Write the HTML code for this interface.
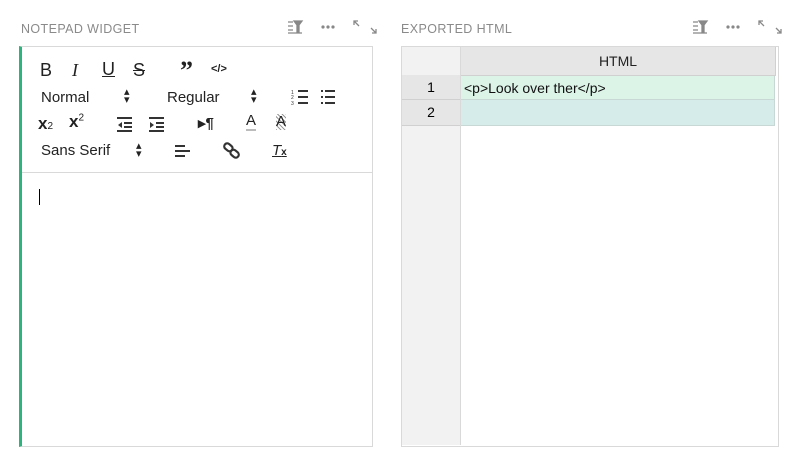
<!DOCTYPE html>
<html><head><style>
body{margin:0;width:800px;height:468px;background:#fff;font-family:"Liberation Sans",sans-serif;position:relative;overflow:hidden}
.t{position:absolute;top:22px;font-size:12.5px;color:#8a8a8a;letter-spacing:0.4px}
.box{position:absolute;border:1px solid #d9d9d9;background:#fff}
.tb{position:absolute;font-size:15px;color:#222}
.g{position:absolute;color:#333}
</style></head><body>
<div class="t" style="left:21px">NOTEPAD WIDGET</div>
<div class="t" style="left:401px">EXPORTED HTML</div>
<svg style="position:absolute;left:287px;top:19px" width="100" height="16">
 <g stroke="#888" stroke-width="1.3" fill="none">
  <path d="M1 3h5M1 7h5M1 11h5M1 14h14"/><path d="M7 2h8l-3 4v7h-2V6z" fill="#888"/>
  <path d="M71 2h-4v4M67 2l5 5M85 14h4v-4M89 14l-5-5"/>
 </g>
 <g fill="#888"><circle cx="36" cy="8" r="1.6"/><circle cx="41" cy="8" r="1.6"/><circle cx="46" cy="8" r="1.6"/></g>
</svg>
<svg style="position:absolute;left:692px;top:19px" width="100" height="16">
 <g stroke="#888" stroke-width="1.3" fill="none">
  <path d="M1 3h5M1 7h5M1 11h5M1 14h14"/><path d="M7 2h8l-3 4v7h-2V6z" fill="#888"/>
  <path d="M71 2h-4v4M67 2l5 5M85 14h4v-4M89 14l-5-5"/>
 </g>
 <g fill="#888"><circle cx="36" cy="8" r="1.6"/><circle cx="41" cy="8" r="1.6"/><circle cx="46" cy="8" r="1.6"/></g>
</svg>
<div class="box" style="left:19px;top:46px;width:350px;height:399px;border-left:3px solid #2db37e"></div>
<div style="position:absolute;left:22px;top:172px;width:351px;height:1px;background:#d9d9d9"></div>
<div class="tb" style="left:40px;top:60px;font-size:18px">B</div>
<div class="tb" style="left:72px;top:60px;font-size:18px;font-style:italic;font-family:'Liberation Serif'">I</div>
<div class="tb" style="left:102px;top:59px;font-size:18px;text-decoration:underline">U</div>
<div class="tb" style="left:133px;top:60px;font-size:18px;text-decoration:line-through">S</div>
<div class="tb" style="left:180px;top:58px;font-size:26px;font-weight:bold;font-family:'Liberation Serif';line-height:26px">&#8221;</div>
<div class="tb" style="left:211px;top:63px;font-size:11px;font-weight:bold">&lt;/&gt;</div>
<div class="tb" style="left:41px;top:89px">Normal</div>
<div class="tb" style="left:124px;top:88px;font-size:11px;line-height:8px">▴<br>▾</div>
<div class="tb" style="left:167px;top:89px">Regular</div>
<div class="tb" style="left:251px;top:88px;font-size:11px;line-height:8px">▴<br>▾</div>
<svg class="g" style="left:290px;top:88px" width="50" height="18" stroke="#333" stroke-width="2">
 <path d="M8 3h10M8 9h10M8 15h10M35 3h10M35 9h10M35 15h10"/><path d="M31 3h2M31 9h2M31 15h2"/>
 <text x="1" y="6" font-size="5" fill="#333" stroke="none">1</text><text x="1" y="11" font-size="5" fill="#333" stroke="none">2</text><text x="1" y="17" font-size="5" fill="#333" stroke="none">3</text>
</svg>
<div class="tb" style="left:38px;top:114px;font-weight:bold;font-size:17px">x<span style="font-size:10px;font-weight:normal">2</span></div>
<div class="tb" style="left:69px;top:112px;font-weight:bold;font-size:17px">x<sup style="font-size:10px;font-weight:normal">2</sup></div>
<svg style="position:absolute;left:117px;top:116px" width="50" height="16" stroke="#333" stroke-width="2">
 <path d="M0 2h15M7 7h8M7 11h8M0 15h15M32 2h15M39 7h8M39 11h8M32 15h15"/>
 <path d="M5 6l-4 3 4 3z M33 6l4 3-4 3z" fill="#333" stroke="none"/>
</svg>
<div class="tb" style="left:198px;top:114px;font-weight:bold">▸¶</div>
<div class="tb" style="left:246px;top:113px;border-bottom:2px solid #bbb;line-height:16px">A</div>
<div class="tb" style="left:276px;top:114px;background:repeating-linear-gradient(45deg,#999 0 1px,#fff 1px 3px);line-height:16px">A</div>
<div class="tb" style="left:41px;top:142px">Sans Serif</div>
<div class="tb" style="left:136px;top:142px;font-size:11px;line-height:8px">▴<br>▾</div>
<svg style="position:absolute;left:175px;top:144px" width="16" height="14" stroke="#333" stroke-width="2"><path d="M0 2h10M0 7h15M0 12h10"/></svg>
<svg style="position:absolute;left:223px;top:142px" width="18" height="18" stroke="#333" stroke-width="2.2" fill="none"><rect x="1" y="2" width="9" height="6" rx="3" transform="rotate(40 5 5)"/><rect x="7" y="9" width="9" height="6" rx="3" transform="rotate(40 12 12)"/></svg>
<div class="tb" style="left:272px;top:142px;font-style:italic;text-decoration:underline">T<span style="font-size:10px;font-style:normal;font-weight:bold">x</span></div>
<div style="position:absolute;left:39px;top:189px;width:1px;height:16px;background:#000"></div>
<div class="box" style="left:401px;top:46px;width:376px;height:399px"></div>
<div style="position:absolute;left:402px;top:47px;width:58px;height:398px;background:#f2f2f2;border-right:1px solid #d9d9d9"></div>
<div style="position:absolute;left:461px;top:47px;width:314px;height:28px;background:#e6e6e6;border-bottom:1px solid #d0d0d0;border-right:1px solid #d0d0d0;text-align:center;line-height:28px;font-size:14px;color:#222">HTML</div>
<div style="position:absolute;left:402px;top:75px;width:58px;height:24px;background:#e6e6e6;border-bottom:1px solid #d0d0d0;text-align:center;line-height:24px;font-size:14px">1</div>
<div style="position:absolute;left:402px;top:100px;width:58px;height:25px;background:#e6e6e6;border-bottom:1px solid #d0d0d0;text-align:center;line-height:25px;font-size:14px">2</div>
<div style="position:absolute;left:461px;top:76px;width:314px;height:24px;background:#dcf3e8;border-bottom:1px solid #c8d8d4;border-right:1px solid #c8d8d4;line-height:24px;font-size:14px;color:#111;padding-left:3px;box-sizing:border-box">&lt;p&gt;Look over ther&lt;/p&gt;</div>
<div style="position:absolute;left:461px;top:100px;width:314px;height:26px;background:#d6ecea;border-bottom:1px solid #c8d8d4;border-right:1px solid #c8d8d4;box-sizing:border-box"></div>
</body></html>
